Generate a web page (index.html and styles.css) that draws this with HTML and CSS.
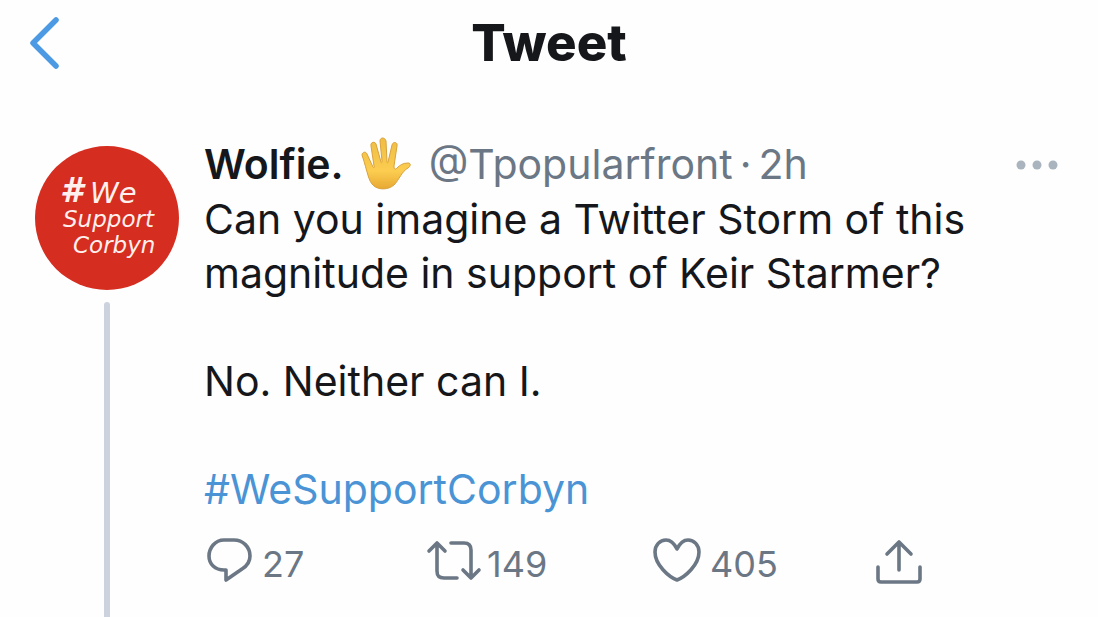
FILE: index.html
```html
<!DOCTYPE html>
<html lang="en">
<head>
<meta charset="utf-8">
<meta name="viewport" content="width=device-width, initial-scale=1">
<title>Tweet</title>
<link rel="stylesheet" href="styles.css">
</head>
<body>
<div class="page">
  <header class="topbar">
    <button class="icon-button back" type="button" aria-label="Back">
      <svg width="34" height="54" viewBox="0 0 34 54" fill="none" stroke="#4b9ae3" stroke-width="5.5" stroke-linecap="round" stroke-linejoin="round"><path d="M28 3 5 26l23 23"/></svg>
    </button>
    <h1 class="title">Tweet</h1>
  </header>
  <main class="tweet">
    <div class="rail">
      <svg class="avatar" viewBox="0 0 144 144" role="img" aria-label="#We Support Corbyn">
        <circle cx="72" cy="72" r="72" fill="#d52d20"/>
        <g class="avatar-text">
          <text class="avatar-hash" x="25" y="56">#</text>
          <text class="avatar-we" x="55" y="57">We</text>
          <text class="avatar-line" x="28" y="81">Support</text>
          <text class="avatar-line" x="38" y="107">Corbyn</text>
        </g>
      </svg>
      <div class="thread"></div>
    </div>
    <article class="content">
      <div class="byline">
        <strong class="name">Wolfie.</strong>
        <svg class="hand" viewBox="0 0 50 54" role="img" aria-label="Raised hand">
          <defs>
            <linearGradient id="skin" x1="0" y1="0" x2="0" y2="1"><stop offset="0" stop-color="#f0bd45"/><stop offset=".65" stop-color="#fbcd50"/><stop offset="1" stop-color="#e8a833"/></linearGradient>
          </defs>
          <path fill="url(#skin)" stroke="#d9a23c" stroke-width="1" stroke-linejoin="round" d="M1 18c0-3 4-4 5-1l6 13c1 1 2 0 1-1L10 9c-1-4 4-5 5-2l5 18c0 1 1 1 1-1l-2-20c0-4 5-4 6 0l1 21c0 1 1 1 1 0l4-17c1-4 6-3 5 1l-3 20c0 3 1 4 3 2 3-3 6-5 11-5 3 0 3 3 0 5-6 3-9 12-14 17-6 5-15 5-20 1-6-5-6-13-12-31Z"/>
        </svg>
        <span class="meta"><span>@Tpopularfront</span><span>·</span><span class="time">2h</span></span>
        <button class="icon-button more" type="button" aria-label="More">
          <svg width="42" height="12" viewBox="0 0 42 12" fill="#aab4be"><circle cx="5" cy="7" r="4.5"/><circle cx="21" cy="7" r="4.5"/><circle cx="37" cy="7" r="4.5"/></svg>
        </button>
      </div>
      <p class="text">Can you imagine a Twitter Storm of this<br>magnitude in support of Keir Starmer?</p>
      <p class="text">No. Neither can I.</p>
      <p class="text"><a class="tag" href="#WeSupportCorbyn">#WeSupportCorbyn</a></p>
      <div class="actions">
        <button class="icon-button action" type="button" aria-label="Reply, 27">
          <svg class="action-icon" viewBox="0 0 48 48"><path d="M20 4h10c9 0 16 7 16 16 0 6-3 10-8 13L22 44V34h-2C11 34 5 28 5 20S11 4 20 4Z"/></svg>
          <span class="count">27</span>
        </button>
        <button class="icon-button action retweet" type="button" aria-label="Retweet, 149">
          <svg class="action-icon" viewBox="0 0 56 48"><path d="M3 15l8-8 8 8M11 8v27c0 5 2 7 7 7h13M25 7h13c5 0 7 3 7 7v27M37 34l8 8 8-8"/></svg>
          <span class="count">149</span>
        </button>
        <button class="icon-button action" type="button" aria-label="Like, 405">
          <svg class="action-icon" viewBox="0 0 48 48"><path d="M25 13C22 7 18 4 14 4 8 4 3 9 3 16c0 13 14 25 22 28 8-3 22-15 22-28 0-7-5-12-11-12-4 0-8 3-11 9Z"/></svg>
          <span class="count">405</span>
        </button>
        <button class="icon-button action" type="button" aria-label="Share">
          <svg class="action-icon" viewBox="0 0 48 48"><path d="M25 34V6M13 18 25 6l12 12M4 31v12c0 2 1 3 3 3h36c2 0 3-1 3-3V31"/></svg>
        </button>
      </div>
    </article>
  </main>
</div>
</body>
</html>
```
FILE: styles.css
```css
* { box-sizing: border-box; }

body {
  margin: 0;
  background: #fefefe;
  color: #15171b;
  font-family: Inter, "Liberation Sans", sans-serif;
}

.page {
  display: flex;
  flex-direction: column;
  min-height: 100vh;
}

.icon-button {
  display: flex;
  align-items: center;
  padding: 0;
  border: 0;
  background: none;
  color: inherit;
  font: inherit;
  cursor: pointer;
}

.topbar {
  display: grid;
  grid-template-columns: 1fr auto 1fr;
  align-items: center;
  height: 88px;
  padding: 0 28px;
}

.title {
  margin: 0;
  padding-bottom: 2px;
  font-size: 51px;
  font-weight: 800;
  line-height: 56px;
}

.tweet {
  display: flex;
  flex: 1;
  gap: 25px;
  padding: 48px 40px 0 35px;
}

.rail {
  display: flex;
  flex: none;
  flex-direction: column;
  align-items: center;
  gap: 12px;
  width: 144px;
  padding-top: 10px;
}

.avatar {
  width: 144px;
  height: 144px;
}

.avatar-text {
  fill: #fff0ee;
  font-family: "DejaVu Sans", sans-serif;
  font-style: italic;
}

.avatar-hash { font-size: 33px; font-weight: 700; }
.avatar-we { font-size: 29px; }
.avatar-line { font-size: 23px; }

.thread {
  flex: 1;
  width: 6px;
  border-radius: 3px 3px 0 0;
  background: #cdd3de;
}

.content {
  flex: 1;
  min-width: 0;
}

.byline {
  display: flex;
  align-items: center;
  height: 56px;
  font-size: 41px;
  white-space: nowrap;
}

.name { font-weight: 600; }

.hand {
  width: 50px;
  height: 54px;
  margin: 0 18px 0 17px;
}

.meta {
  display: flex;
  gap: 7px;
  color: #6b7785;
}

.more { margin-left: auto; }

.text {
  margin: 0 0 54px;
  font-size: 41px;
  line-height: 54px;
}

.tag {
  color: #4a94d6;
  text-decoration: none;
}

.actions {
  display: grid;
  grid-template-columns: 222px 226px 222px auto;
  justify-content: start;
  margin-top: -38px;
  color: #6b7785;
  font-size: 36px;
}

.action {
  gap: 10px;
  height: 56px;
}

.retweet { gap: 5px; }

.action-icon {
  width: 48px;
  height: 48px;
  overflow: visible;
  fill: none;
  stroke: currentColor;
  stroke-width: 3.6;
  stroke-linecap: round;
  stroke-linejoin: round;
}

.retweet .action-icon { width: 56px; }

.count { padding-top: 8px; }
```
